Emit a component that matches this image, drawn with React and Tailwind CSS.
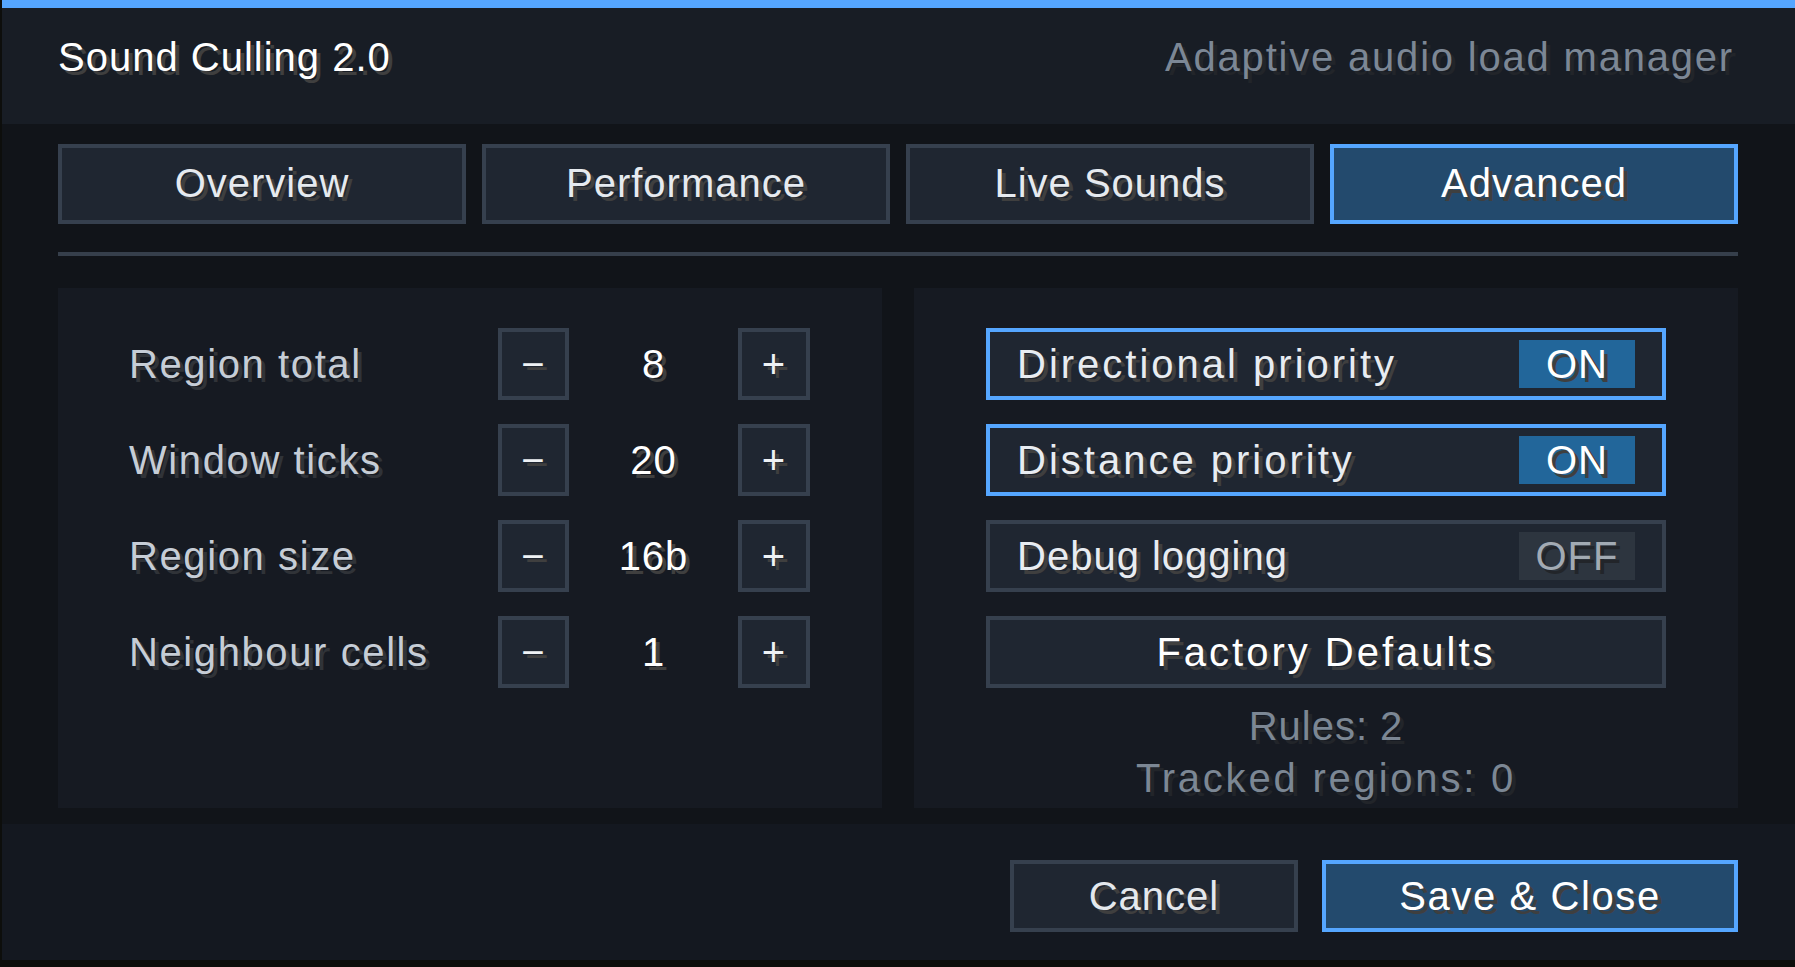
import React, { useState } from "react";

const shW = "[text-shadow:4px_4px_0_#3f3f3f]";
const shL = "[text-shadow:4px_4px_0_#303338]";
const shG = "[text-shadow:4px_4px_0_#22252a]";

const tabs = ["Overview", "Performance", "Live Sounds", "Advanced"];

function Stepper({ label, value }) {
  return (
    <div className="flex items-center h-[72px]">
      <div className={`w-[369px] text-[#c6cdd6] tracking-[1.6px] ${shL}`}>{label}</div>
      <button className={`w-[71px] h-[72px] border-4 border-[#36404e] bg-[#1f2631] text-[#eef1f4] flex items-center justify-center ${shW}`}>
        −
      </button>
      <div className={`w-[169px] text-center text-white ${shW}`}>{value}</div>
      <button className={`w-[72px] h-[72px] border-4 border-[#36404e] bg-[#1f2631] text-[#eef1f4] flex items-center justify-center ${shW}`}>
        +
      </button>
    </div>
  );
}

function Toggle({ label, on, wide }) {
  return (
    <div
      className={
        on
          ? "h-[72px] border-4 border-[#55a6ff] bg-[#1f2631] flex items-center justify-between pl-[27px] pr-[27px]"
          : "h-[72px] border-4 border-[#36404e] bg-[#1f2631] flex items-center justify-between pl-[27px] pr-[27px]"
      }
    >
      <span className={`text-[#e8ecf1] ${wide ? "tracking-[3px]" : "tracking-[1px]"} ${shW}`}>{label}</span>
      {on ? (
        <span className={`w-[116px] h-12 bg-[#22669a] flex items-center justify-center text-white ${shW}`}>ON</span>
      ) : (
        <span className={`w-[116px] h-12 bg-[#2d353f] flex items-center justify-center text-[#a2aab3] ${shG}`}>OFF</span>
      )}
    </div>
  );
}

export default function App() {
  const [tab, setTab] = useState("Advanced");

  return (
    <div className="w-[1795px] h-[967px] bg-[#0d0e0c] overflow-hidden font-['Liberation_Sans',Arial,sans-serif] text-[40px] leading-none tracking-[1px]">
      <div className="ml-[2px] h-[960px] flex flex-col">
        <div className="h-2 bg-[#55a6ff]" />

        <div className="h-[116px] bg-[#181d25] flex items-center justify-between pl-[56px] pr-[61px] pb-[18px]">
          <div className={`text-white ${shW}`}>Sound Culling 2.0</div>
          <div className={`text-[#7c8795] tracking-[1.8px] ${shG}`}>Adaptive audio load manager</div>
        </div>

        <div className="h-[700px] bg-[#111419] pl-[56px] pr-[57px] pt-5">
          <div className="grid grid-cols-4 gap-4 h-20">
            {tabs.map((t) => (
              <button
                key={t}
                onClick={() => setTab(t)}
                className={
                  t === tab
                    ? `border-4 border-[#55a6ff] bg-[#234a6d] text-white flex items-center justify-center pb-0.5 ${shW}`
                    : `border-4 border-[#36404e] bg-[#1f2631] text-[#e6eaef] flex items-center justify-center pb-0.5 ${shW}`
                }
              >
                {t}
              </button>
            ))}
          </div>

          <div className="mt-7 h-1 bg-[#363f4b]" />

          <div className="mt-8 grid grid-cols-2 gap-8 h-[520px]">
            <div className="bg-[#161a22] pl-[71px] pt-10 flex flex-col gap-6">
              <Stepper label="Region total" value="8" />
              <Stepper label="Window ticks" value="20" />
              <Stepper label="Region size" value="16b" />
              <Stepper label="Neighbour cells" value="1" />
            </div>

            <div className="bg-[#161a22] pl-[72px] pt-10">
              <div className="w-[680px] flex flex-col gap-6">
                <Toggle label="Directional priority" on wide />
                <Toggle label="Distance priority" on wide />
                <Toggle label="Debug logging" on={false} />
                <button className={`h-[72px] border-4 border-[#36404e] bg-[#1f2631] text-white tracking-[3px] flex items-center justify-center ${shW}`}>
                  Factory Defaults
                </button>
              </div>
              <div className={`w-[680px] mt-[18px] flex flex-col items-center gap-3 text-[#7c8794] ${shG}`}>
                <div>Rules: 2</div>
                <div className="tracking-[2.8px]">Tracked regions: 0</div>
              </div>
            </div>
          </div>
        </div>

        <div className="flex-1 bg-[#141820] flex justify-end gap-6 pt-9 pr-[57px]">
          <button className={`w-[288px] h-[72px] border-4 border-[#36404e] bg-[#1f2631] text-[#e4e8ed] flex items-center justify-center ${shW}`}>
            Cancel
          </button>
          <button className={`w-[416px] h-[72px] border-4 border-[#55a6ff] bg-[#234a6d] text-white tracking-[1.6px] flex items-center justify-center ${shW}`}>
            Save &amp; Close
          </button>
        </div>
      </div>
    </div>
  );
}
